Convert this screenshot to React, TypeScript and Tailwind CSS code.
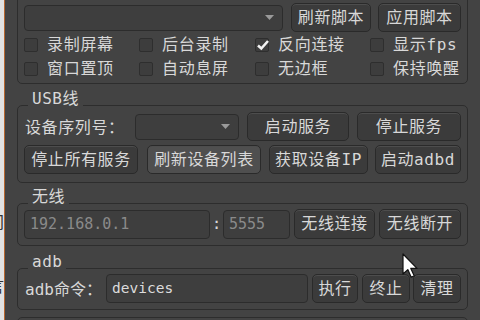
import React from "react";

const FONT = '"DejaVu Sans Mono", "Noto Sans CJK SC", monospace';
const CJK = '"Noto Sans CJK SC", sans-serif';

function Btn({ w, label, light }: { w: string; label: string; light?: boolean }) {
  return (
    <div
      className={`${w} h-full shrink-0 flex items-center justify-center rounded-[5px] border border-[#2a2a2a] ${
        light ? "bg-[#4f4f4f]" : "bg-[#3b3b3b]"
      } shadow-[inset_0_1px_0_#4d4d4d] text-[#d8d8d8] tracking-[0.6px]`}
    >
      {label}
    </div>
  );
}

function Arrow() {
  return (
    <svg width="9" height="5" viewBox="0 0 9 5">
      <path d="M0 0 L9 0 L4.5 5 Z" fill="#9a9a9a" />
    </svg>
  );
}

function Check({ label, checked }: { label: string; checked?: boolean }) {
  return (
    <div className="flex items-center h-[20px]">
      <div className="relative w-[14px] h-[14px] border border-[#2e2e2e] bg-[#3d3d3d] rounded-[2px] shrink-0">
        {checked && (
          <svg className="absolute -left-[1px] -top-[2px]" width="16" height="16" viewBox="0 0 16 16">
            <path d="M3 8.5 L6.3 11.5 L13 4" stroke="#f2f2f2" strokeWidth="2.6" fill="none" />
          </svg>
        )}
      </div>
      <span className="ml-[9px] text-[#d8d8d8] tracking-[0.7px] leading-[20px]">{label}</span>
    </div>
  );
}

function Title({ text }: { text: string }) {
  return (
    <div className="relative z-10 ml-[11px] w-fit px-[4px] h-[16px] leading-[16px] bg-[#434343] text-[#d8d8d8] tracking-[0.5px]">
      {text}
    </div>
  );
}

export default function App() {
  return (
    <div
      className="w-[480px] h-[320px] overflow-hidden bg-[#434343] flex items-start relative text-[16px]"
      style={{ fontFamily: FONT }}
    >
      {/* left strip */}
      <div className="w-[4px] h-[320px] bg-[#e2e2e2] overflow-hidden flex flex-col shrink-0">
        <div className="h-[214px] shrink-0" />
        <div className="-ml-[12px] text-[#333] leading-[18px] shrink-0">间</div>
        <div className="h-[46px] shrink-0" />
        <div className="-ml-[12px] text-[#333] leading-[18px] shrink-0">言</div>
      </div>
      <div className="w-[1px] h-[320px] bg-[#b8672f] shrink-0" />

      <div className="flex flex-col pl-[12px] shrink-0">
        {/* top group */}
        <div className="shrink-0 -mt-[10px] h-[94px] w-[451px] border border-[#2d2d2d] rounded-[5px] pt-[12px] pl-[6px] pr-[5px] flex flex-col">
          <div className="h-[29px] flex items-center shrink-0">
            <div className="w-[259px] h-[26px] border border-[#2c2c2c] bg-[#3e3e3e] rounded-[4px] flex items-center justify-end pr-[8px]">
              <Arrow />
            </div>
            <div className="w-[8px]" />
            <Btn w="w-[80px]" label="刷新脚本" />
            <div className="w-[7px]" />
            <Btn w="w-[83px]" label="应用脚本" />
          </div>
          <div className="mt-[3px] grid grid-cols-[115px_116px_115px_1fr] gap-y-[4px] shrink-0">
            <Check label="录制屏幕" />
            <Check label="后台录制" />
            <Check label="反向连接" checked />
            <Check label="显示fps" />
            <Check label="窗口置顶" />
            <Check label="自动息屏" />
            <Check label="无边框" />
            <Check label="保持唤醒" />
          </div>
        </div>

        {/* USB */}
        <div className="mt-[7px] shrink-0">
          <Title text="USB线" />
        </div>
        <div className="shrink-0 -mt-[2px] h-[78px] w-[451px] border border-[#2d2d2d] rounded-[5px] pt-[6px] pl-[6px] pr-[5px] flex flex-col gap-[4px]">
          <div className="h-[29px] flex items-center shrink-0">
            <div className="w-[111px] pl-[1px] text-[#d8d8d8] tracking-[0.6px]">
              设备序列号<span style={{ fontFamily: CJK }}>：</span>
            </div>
            <div className="w-[104px] h-[26px] border border-[#2c2c2c] bg-[#3e3e3e] rounded-[4px] flex items-center justify-end pr-[8px] shrink-0">
              <Arrow />
            </div>
            <div className="w-[8px]" />
            <Btn w="w-[102px]" label="启动服务" />
            <div className="w-[8px]" />
            <Btn w="w-[104px]" label="停止服务" />
          </div>
          <div className="h-[29px] flex items-center shrink-0">
            <Btn w="w-[114px]" label="停止所有服务" />
            <div className="w-[9px]" />
            <Btn w="w-[114px]" label="刷新设备列表" light />
            <div className="w-[8px]" />
            <Btn w="w-[99px]" label="获取设备IP" />
            <div className="w-[7px]" />
            <Btn w="w-[86px]" label="启动adbd" />
          </div>
        </div>

        {/* wireless */}
        <div className="mt-[6px] shrink-0">
          <Title text="无线" />
        </div>
        <div className="shrink-0 -mt-[2px] h-[43px] w-[451px] border border-[#2d2d2d] rounded-[5px] pt-[5px] pl-[6px] pr-[5px]">
          <div className="h-[30px] flex items-center">
            <div className="w-[186px] h-[29px] border border-[#2c2c2c] bg-[#3e3e3e] rounded-[4px] flex items-center pl-[5px] text-[15px] text-[#8a8a8a]">
              192.168.0.1
            </div>
            <div className="w-[13px] text-center text-[#d8d8d8]">:</div>
            <div className="w-[67px] h-[29px] border border-[#2c2c2c] bg-[#3e3e3e] rounded-[4px] flex items-center pl-[5px] text-[15px] text-[#8a8a8a]">
              5555
            </div>
            <div className="w-[4px]" />
            <Btn w="w-[81px]" label="无线连接" />
            <div className="w-[4px]" />
            <Btn w="w-[82px]" label="无线断开" />
          </div>
        </div>

        {/* adb */}
        <div className="mt-[8px] shrink-0">
          <Title text="adb" />
        </div>
        <div className="shrink-0 -mt-[2px] h-[42px] w-[451px] border border-[#2d2d2d] rounded-[5px] pt-[5px] pl-[6px] pr-[5px]">
          <div className="h-[29px] flex items-center">
            <div className="w-[82px] pl-[1px] text-[#d8d8d8] whitespace-nowrap">
              adb命令<span style={{ fontFamily: CJK }}>：</span>
            </div>
            <div className="w-[202px] h-[29px] border border-[#2c2c2c] bg-[#3e3e3e] rounded-[4px] flex items-center pl-[5px] text-[14.5px] text-[#dcdcdc]">
              devices
            </div>
            <div className="w-[4px]" />
            <Btn w="w-[46px]" label="执行" />
            <div className="w-[4px]" />
            <Btn w="w-[48px]" label="终止" />
            <div className="w-[3px]" />
            <Btn w="w-[48px]" label="清理" />
          </div>
        </div>

        {/* next group (partially visible) */}
        <div className="shrink-0 mt-[7px] h-[20px] w-[451px] border border-[#2d2d2d] rounded-[5px]" />
      </div>

      {/* mouse cursor */}
      <svg className="absolute left-[402px] top-[253px]" width="17" height="26" viewBox="0 0 17 26">
        <path
          d="M1 1 L1 21 L5.8 16.6 L9.2 24.2 L12.2 22.8 L8.8 15.4 L15 15.4 Z"
          fill="#ffffff"
          stroke="#111111"
          strokeWidth="1.2"
          strokeLinejoin="round"
        />
      </svg>
    </div>
  );
}
